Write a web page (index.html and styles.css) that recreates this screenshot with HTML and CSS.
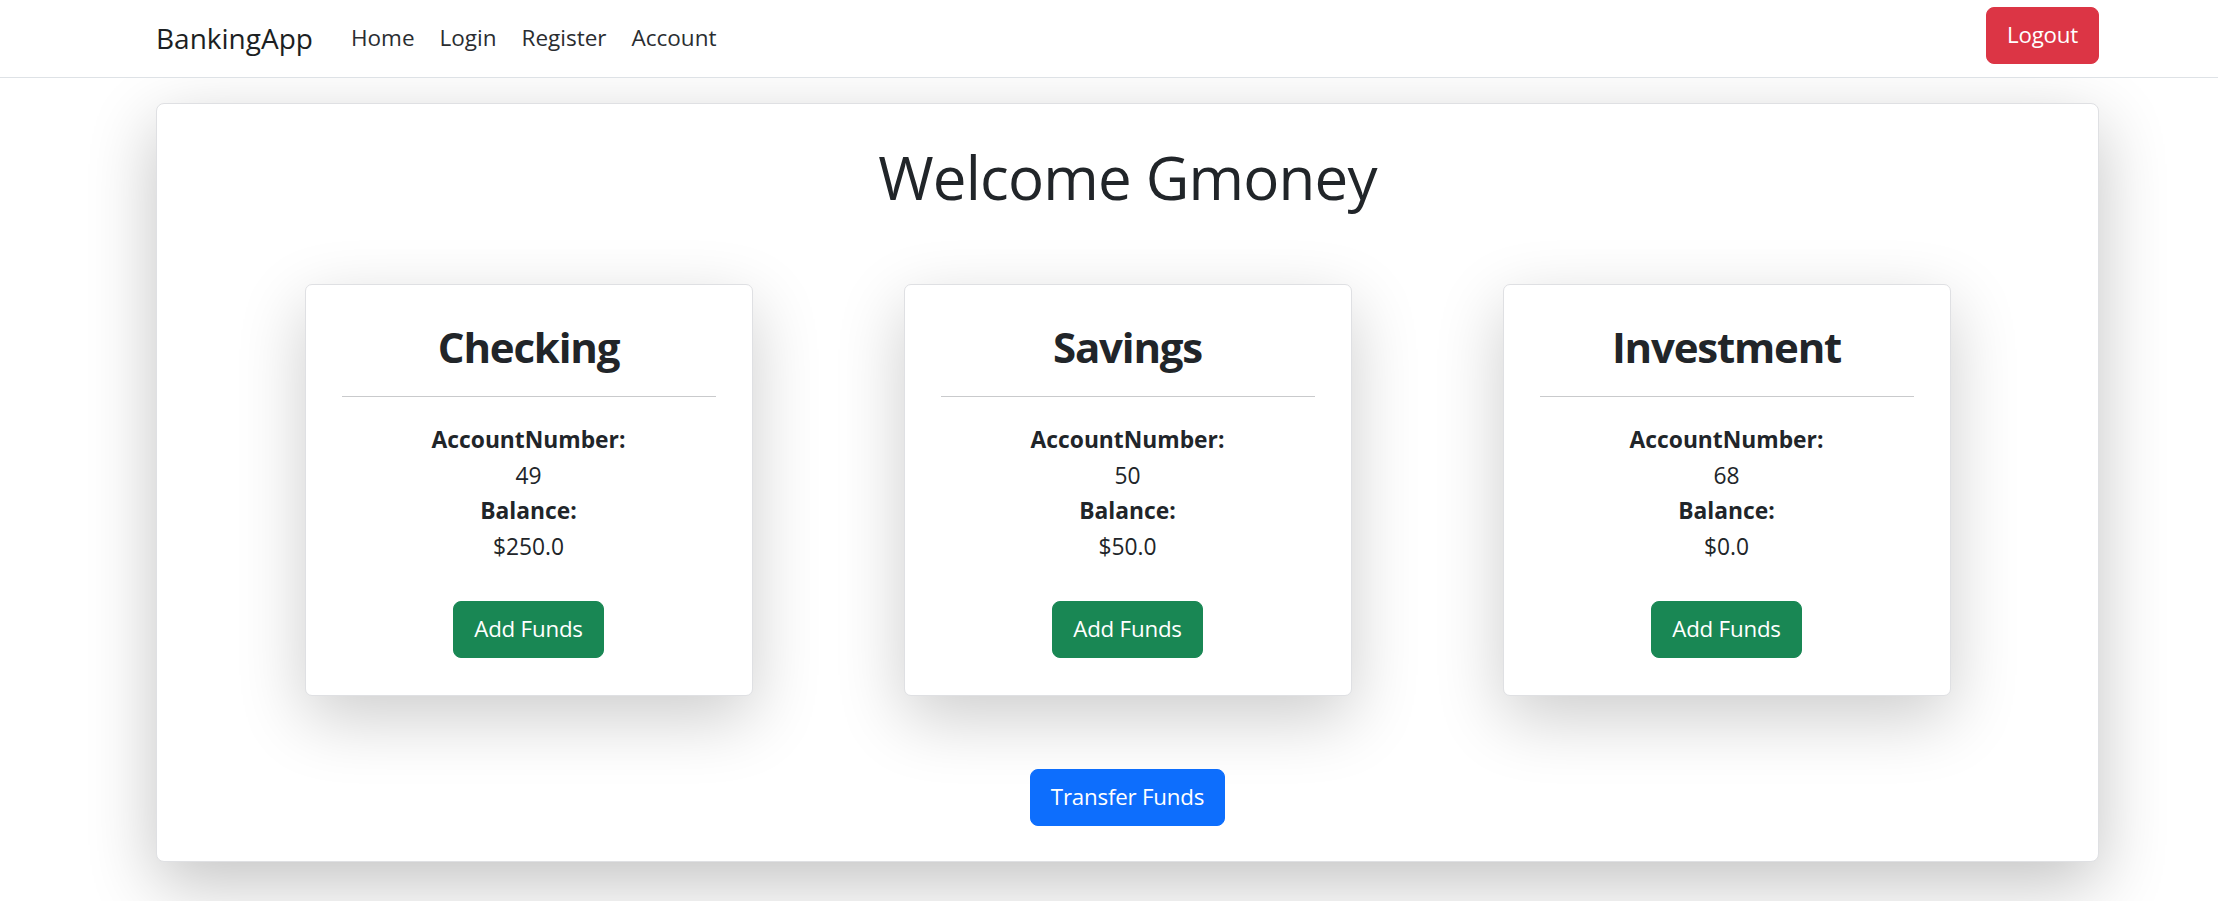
FILE: index.html
```html
<!DOCTYPE html>
<html lang="en">
<head>
<meta charset="utf-8">
<title>BankingApp</title>
<link rel="stylesheet" href="styles.css">
</head>
<body>
<nav class="navbar">
  <div class="nav-inner">
    <a class="brand" href="#">BankingApp</a>
    <ul class="nav-links">
      <li><a href="#">Home</a></li>
      <li><a href="#">Login</a></li>
      <li><a href="#">Register</a></li>
      <li><a href="#">Account</a></li>
    </ul>
    <button class="btn btn-danger">Logout</button>
  </div>
</nav>
<main class="main-card">
  <h1 class="welcome">Welcome Gmoney</h1>
  <div class="accounts">
    <section class="account-card">
      <h2>Checking</h2>
      <hr class="divider">
      <div class="info">
        <strong>AccountNumber:</strong>
        <span>49</span>
        <strong>Balance:</strong>
        <span>$250.0</span>
      </div>
      <button class="btn btn-success">Add Funds</button>
    </section>
    <section class="account-card">
      <h2>Savings</h2>
      <hr class="divider">
      <div class="info">
        <strong>AccountNumber:</strong>
        <span>50</span>
        <strong>Balance:</strong>
        <span>$50.0</span>
      </div>
      <button class="btn btn-success">Add Funds</button>
    </section>
    <section class="account-card">
      <h2>Investment</h2>
      <hr class="divider">
      <div class="info">
        <strong>AccountNumber:</strong>
        <span>68</span>
        <strong>Balance:</strong>
        <span>$0.0</span>
      </div>
      <button class="btn btn-success">Add Funds</button>
    </section>
  </div>
  <div class="transfer-row">
    <button class="btn btn-primary">Transfer Funds</button>
  </div>
</main>
</body>
</html>
```
FILE: styles.css
```css
* { box-sizing: border-box; }

html {
  background: #ffffff;
  overflow: hidden;
}

body {
  margin: 0;
  padding: 0;
  min-height: 901px;
  color: #212529;
  font-family: "Open Sans", "Noto Sans", sans-serif;
}

.navbar {
  background: #ffffff;
  border-bottom: 1px solid #dee2e6;
  height: 78px;
  position: relative;
  z-index: 2;
}

.nav-inner {
  margin-left: 156px;
  width: 1943px;
  height: 77px;
  display: flex;
  align-items: center;
  padding-bottom: 7px;
}

.brand {
  font-size: 28px;
  line-height: 40px;
  color: #1c1f23;
  text-decoration: none;
  margin-right: 38px;
  margin-top: 6px;
}

.nav-links {
  display: flex;
  gap: 25px;
  list-style: none;
  margin: 6px 0 0;
  padding: 0;
  flex: 1;
}

.nav-links a {
  font-size: 22.5px;
  line-height: 34px;
  color: #2a2d31;
  text-decoration: none;
}

.btn {
  font-family: inherit;
  font-size: 22.3px;
  letter-spacing: -0.2px;
  height: 57px;
  padding: 0 20px;
  border: 1px solid transparent;
  border-radius: 8px;
  color: #ffffff;
  cursor: pointer;
  line-height: 1;
}

.btn-danger { background: #dc3545; border-color: #dc3545; }
.btn-success { background: #198754; border-color: #198754; }
.btn-primary { background: #0d6efd; border-color: #0d6efd; }

.main-card {
  margin: 25px 0 0 156px;
  width: 1943px;
  background: #ffffff;
  border: 1px solid #dfe0e3;
  border-radius: 8px;
  box-shadow: 0 22px 68px rgba(0, 0, 0, 0.24);
  padding: 36px 72px 35px;
  position: relative;
  z-index: 1;
}

.welcome {
  margin: 0;
  text-align: center;
  font-size: 60px;
  letter-spacing: -0.8px;
  font-weight: 500;
  line-height: 74px;
}

.accounts {
  display: grid;
  grid-template-columns: repeat(3, 1fr);
  margin-top: 70px;
}

.account-card {
  width: 448px;
  justify-self: center;
  background: #ffffff;
  border: 1px solid #dfe0e3;
  border-radius: 7px;
  box-shadow: 0 22px 68px rgba(0, 0, 0, 0.2);
  padding: 34px 36px 37px;
  display: flex;
  flex-direction: column;
  align-items: center;
}

.account-card h2 {
  margin: 0;
  font-size: 42px;
  letter-spacing: -1.2px;
  font-weight: 700;
  line-height: 56px;
}

.divider {
  align-self: stretch;
  margin: 21px 0 25px;
  border: 0;
  border-top: 1px solid #c9cacc;
  height: 0;
}

.info {
  display: flex;
  flex-direction: column;
  align-items: center;
  font-size: 22.8px;
  line-height: 35.5px;
}

.info strong { font-weight: 700; }

.account-card .btn {
  margin-top: 37px;
}

.transfer-row {
  display: flex;
  justify-content: center;
  margin-top: 73px;
}
```
